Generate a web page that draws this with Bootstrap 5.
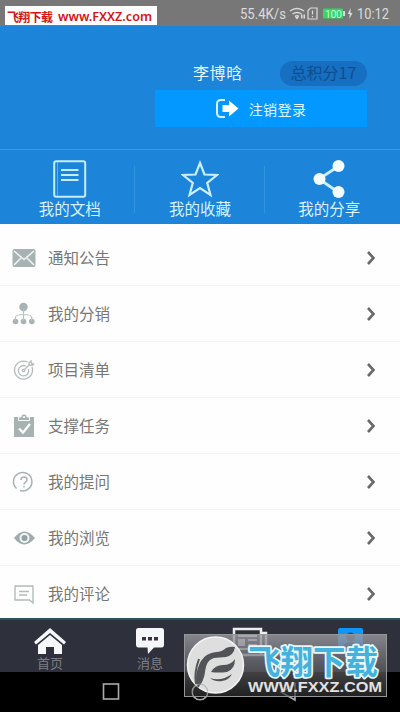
<!DOCTYPE html>
<html lang="zh-CN">
<head>
<meta charset="utf-8">
<meta name="viewport" content="width=device-width, initial-scale=1">
<title>我的</title>
<link href="https://cdn.jsdelivr.net/npm/bootstrap@5.3.0/dist/css/bootstrap.min.css" rel="stylesheet">
<style>
body{font-family:"Noto Sans CJK SC",sans-serif;width:400px;height:712px;overflow:hidden;background:#fefefe;line-height:1}
svg{display:block;flex:none}
.statusbar{height:26px;background:#777;color:#dcdcdc;font:14px/26px Roboto,sans-serif;padding-right:9px}
.site-tag{left:5px;top:6px;width:152px;height:19px;background:#fff;color:#d81818;white-space:nowrap}
.profile{height:123px;background:#1c84d9;padding:35px 33px 0 155px}
.profile-line{height:24px}
.user-name{font-size:16px;color:#e4f6ff;margin-left:38px;letter-spacing:.6px;padding-bottom:2px}
.points{width:87px;height:25px;background:#166fc0;color:#0c4e92;font-size:16px;padding-bottom:2px}
.logout{height:37px;margin-top:5px;background:#0398ff;color:#e6f8ff;font-size:14px;letter-spacing:.4px;border-radius:1px;padding-right:1px}
.logout span{margin-left:10px}
.shortcuts{height:75px;background:#1c84d9;border-top:1px solid #3b9be6;color:#d9f3ff;font-size:15.5px}
.shortcuts>div{padding-top:9px}
.shortcuts span{margin-top:2px}
.shortcuts .split::before,.shortcuts .split::after{content:"";position:absolute;left:1px;top:16px;height:47px;border-left:1px solid #3293df}
.shortcuts .split::after{left:auto;right:2px}
.nudge-right{transform:translateX(3px)}
.nudge-left{transform:translateX(-4px)}
.menu-rows{height:394px;overflow:hidden}
.menu-row{height:56px;padding:0 23px 0 11px;border-bottom:1px solid #f3f5f5;color:#777;font-size:15.5px;background:#fefefe}
.menu-row:first-child{height:62px;padding-top:6px}
.menu-row span{margin-left:11px}
.tabs{height:54px;background:#2e303b;border-top:2px solid #285361;color:#7c7e86;font-size:13px;padding-top:7px}
.tabs span{margin-top:-1px}
.sysnav{height:40px;background:#000}
.overlay{left:184px;top:634px}
</style>
<script src="https://cdn.jsdelivr.net/npm/bootstrap@5.3.0/dist/js/bootstrap.bundle.min.js"></script>
</head>
<body class="position-relative m-0">
<header class="statusbar d-flex justify-content-end align-items-center">
  <svg width="152" height="26" viewBox="0 0 152 26" fill="#dcdcdc">
    <text x="1" y="19" font-size="14" textLength="46" lengthAdjust="spacingAndGlyphs">55.4K/s</text>
    <g fill="none" stroke="#dcdcdc" stroke-width="1.500"><path d="M51 11q7-5 14 0M53.500 14q4.500-3 9 0M56 16.500q2-1.300 4 0"/><path d="M71.500 8h6.500v11h-9v-8.500zM73.500 10.500v4M73.500 16v1.200" stroke-width="1.200"/></g>
    <path d="M56 17h4l-2 2.500zM62 14.500h1.500v4H62zM64.500 14.500H66v4h-1.500z"/>
    <rect x="84" y="8.500" width="20" height="10" rx="1" fill="#35d568"/><path d="M104 11h2v5h-2z"/>
    <text x="86" y="17.500" font-size="10.500" fill="#c2ffd3" textLength="17">100</text>
    <path d="m111.500 8-2.700 6h2l-.5 5 3.200-6h-2z"/>
    <text x="118" y="19" font-size="14" textLength="32" lengthAdjust="spacingAndGlyphs">10:12</text>
  </svg>
</header>
<div class="site-tag position-absolute">
  <svg width="152" height="19" fill="#d31515"><text x="2" y="15.500" font-family="Noto Sans CJK SC,sans-serif" font-weight="700" font-size="12" textLength="46">飞翔下载</text><text x="53" y="14.500" font-family="Noto Sans,sans-serif" font-weight="600" font-size="12" textLength="94" lengthAdjust="spacingAndGlyphs">www.FXXZ.com</text></svg>
</div>
<section class="profile">
  <div class="profile-line d-flex justify-content-between align-items-center">
    <div class="user-name">李博晗</div>
    <div class="points rounded-pill d-flex align-items-center justify-content-center">总积分17</div>
  </div>
  <div class="logout d-flex align-items-center justify-content-center">
    <svg width="24" height="22" viewBox="0 0 24 22"><path d="M10 2H6Q2 2 2 6v9q0 4 4 4h4" fill="none" stroke="#d4f2ff" stroke-width="2"/><path d="M7.500 7H14V2.500l9.500 8-9.500 8V14H7.500z" fill="#fff"/></svg>
    <span>注销登录</span>
  </div>
</section>
<section class="shortcuts row g-0 text-center">
  <div class="col d-flex flex-column align-items-center">
    <svg class="nudge-right" width="34" height="40" viewBox="0 0 34 40"><g fill="none" stroke="#c5edff" stroke-width="2"><rect x="1.200" y="2.200" width="31" height="35.500" rx="2"/><path d="M4.500 3v34" stroke-width="1" opacity=".4"/><path d="M8 11h17.500M8 16h17.500M8 21h17.500" stroke-width="2.200"/></g></svg>
    <span class="nudge-right">我的文档</span>
  </div>
  <div class="col split position-relative d-flex flex-column align-items-center">
    <svg width="38" height="40" viewBox="0 0 38 40"><path d="m19 4 4.500 11.500 12.500.5-9.800 7.800L29.500 36 19 29 8.500 36l3.300-12.200L2 16l12.500-.5z" fill="none" stroke="#c9efff" stroke-width="2.200"/></svg>
    <span>我的收藏</span>
  </div>
  <div class="col d-flex flex-column align-items-center">
    <svg class="nudge-left" width="34" height="40" viewBox="0 0 34 40"><path d="M26 7.500 7 20l19 13" fill="none" stroke="#c9efff" stroke-width="2.800"/><g fill="#f4fcff"><circle cx="26.500" cy="7" r="6"/><circle cx="7.500" cy="20" r="6"/><circle cx="26.500" cy="33" r="6"/></g></svg>
    <span class="nudge-left">我的分享</span>
  </div>
</section>
<main class="menu-rows">
  <div class="menu-row d-flex align-items-center">
    <svg width="26" height="26" viewBox="0 0 26 26"><rect x="1.500" y="4" width="23" height="18" rx="2" fill="#a7b2b2"/><path d="m3 6 10 8.500L23 6M3 20l7-7M23 20l-7-7" fill="none" stroke="#f0f4f4" stroke-width="1.500"/></svg>
    <span>通知公告</span><svg class="ms-auto" width="13" height="16"><path d="m4 2 5.500 6L4 14" fill="none" stroke="#6a6a6a" stroke-width="2.600"/></svg>
  </div>
  <div class="menu-row d-flex align-items-center">
    <svg width="26" height="26" viewBox="0 0 26 26" fill="#a7b2b2"><circle cx="12.500" cy="6" r="4.200"/><circle cx="4.500" cy="20.500" r="2.800"/><circle cx="12.500" cy="20.500" r="2.800"/><circle cx="20.800" cy="20.500" r="2.800"/><path d="M12.500 8v12M4.500 20v-3.500q0-3 8-3t8.300 3V20" fill="none" stroke="#b9c2c2" stroke-width="1.200"/></svg>
    <span>我的分销</span><svg class="ms-auto" width="13" height="16"><path d="m4 2 5.500 6L4 14" fill="none" stroke="#6a6a6a" stroke-width="2.600"/></svg>
  </div>
  <div class="menu-row d-flex align-items-center">
    <svg width="26" height="26" viewBox="0 0 26 26" fill="none" stroke="#b3bbbb" stroke-width="1.300"><path d="M16.500 5A9 9 0 1 0 21 10M14.800 9A5.200 5.200 0 1 0 17.500 12"/><circle cx="12.500" cy="13.500" r="1.200"/><path d="m13 13 6-6M18 8V5.500L20 4l.5 2.500 2 .5-1.500 1.500z"/></svg>
    <span>项目清单</span><svg class="ms-auto" width="13" height="16"><path d="m4 2 5.500 6L4 14" fill="none" stroke="#6a6a6a" stroke-width="2.600"/></svg>
  </div>
  <div class="menu-row d-flex align-items-center">
    <svg width="26" height="26" viewBox="0 0 26 26"><path d="M3 4h20v20H3z" fill="#a7b2b2"/><path d="M7.500 7.500V4H10q0-3 3-3t3 3h2.500v3.500z" fill="#a7b2b2" stroke="#f4f7f7"/><circle cx="13" cy="4" r="1.100" fill="#fff"/><path d="m8 15.500 4 4 7-8.500" fill="none" stroke="#fff" stroke-width="2.200"/></svg>
    <span>支撑任务</span><svg class="ms-auto" width="13" height="16"><path d="m4 2 5.500 6L4 14" fill="none" stroke="#6a6a6a" stroke-width="2.600"/></svg>
  </div>
  <div class="menu-row d-flex align-items-center">
    <svg width="26" height="26" viewBox="0 0 26 26" fill="none" stroke="#a7b2b2" stroke-width="1.500"><path d="M5.500 19.500A9.200 9.200 0 1 1 9 21.500M10 11q0-3 3-3t3 2.700q0 1.500-1.500 2.500-1.500.8-1.500 2.300M13 17v1.500"/></svg>
    <span>我的提问</span><svg class="ms-auto" width="13" height="16"><path d="m4 2 5.500 6L4 14" fill="none" stroke="#6a6a6a" stroke-width="2.600"/></svg>
  </div>
  <div class="menu-row d-flex align-items-center">
    <svg width="26" height="26" viewBox="0 0 26 26"><path d="M3 13q10-13 21 0-11 13-21 0z" fill="#a0abab"/><circle cx="13.500" cy="13" r="5" fill="#f1f5f5"/><circle cx="13.500" cy="13" r="3" fill="#94a1a1"/></svg>
    <span>我的浏览</span><svg class="ms-auto" width="13" height="16"><path d="m4 2 5.500 6L4 14" fill="none" stroke="#6a6a6a" stroke-width="2.600"/></svg>
  </div>
  <div class="menu-row d-flex align-items-center border-0">
    <svg width="26" height="26" viewBox="0 0 26 26" fill="none" stroke="#b2bbbb" stroke-width="1.400"><path d="M4 5h18v17l-3.500-3H4zM8 10.500h10M8 14h8"/></svg>
    <span>我的评论</span><svg class="ms-auto" width="13" height="16"><path d="m4 2 5.500 6L4 14" fill="none" stroke="#6a6a6a" stroke-width="2.600"/></svg>
  </div>
</main>
<nav class="tabs row g-0 text-center">
  <div class="col d-flex flex-column align-items-center">
    <svg width="34" height="30" viewBox="0 0 34 30" fill="#f5f7f8"><path d="M17 1 1 15l2 2.500L17 6l14 11.500 2-2.500z"/><path d="m17 8 12 10v9h-8v-7h-8v7H5v-9z"/></svg><span>首页</span>
  </div>
  <div class="col d-flex flex-column align-items-center">
    <svg width="30" height="30" viewBox="0 0 30 30"><path d="M3.500 1h23Q29 1 29 3.500v14q0 3-2.500 3H19L13 27l-.5-6.500h-9q-2.500 0-2.500-3v-14Q1 1 3.500 1z" fill="#f5f7f8"/><path d="M7 10h4v3.500H7zM13 10h4v3.500h-4zM19 10h4v3.500h-4z" fill="#35363f"/></svg><span>消息</span>
  </div>
  <div class="col d-flex flex-column align-items-center">
    <svg width="36" height="30" viewBox="0 0 36 30"><path d="M2 2h27v26H2zM29 6h5v22h-5" fill="none" stroke="#eee" stroke-width="2.500"/><path d="M6 9h19M6 22h19" stroke="#ddd" stroke-width="2"/><path d="M6 12h7v7H6zM16 12h9v2h-9zM16 17h9v2h-9z" fill="#ddd"/></svg>
  </div>
  <div class="col d-flex flex-column align-items-center">
    <svg width="30" height="30" viewBox="0 0 30 30"><rect x="3" y="1" width="25" height="26" rx="2" fill="#0e96f8"/><circle cx="15.500" cy="10" r="4.500" fill="#254d73"/><path d="M8 22q0-7 7.500-7t7.500 7z" fill="#254d73"/></svg>
  </div>
</nav>
<footer class="sysnav">
  <svg width="400" height="40" fill="none" stroke="#aaa" stroke-width="1.600"><rect x="103.500" y="12" width="15" height="15"/><circle cx="200" cy="20" r="7.800"/><path d="m295 12-14 8 14 8z"/></svg>
</footer>
<div class="overlay position-absolute">
  <svg width="204" height="64" viewBox="0 0 204 64">
    <defs><linearGradient id="glass" x2="0" y2="1"><stop stop-color="#9b9ba3" stop-opacity=".8"/><stop offset=".6" stop-color="#5c5c61" stop-opacity=".72"/><stop offset="1" stop-color="#333" stop-opacity=".65"/></linearGradient></defs>
    <rect x=".5" y=".5" width="202" height="62" fill="url(#glass)" stroke="#96969a"/>
    <circle cx="31.500" cy="31" r="28" fill="#dedede" stroke="#f4f4f4" stroke-width="1.500"/>
    <path d="M14 54C10 45 13 34 17 27q5-8 15-9 6 0 10-4 5-2 9-1-1 8-9 10l-12 1c-7 2-8 8-9 14q-1 9-7 16zM27 38q4-7 12-7 8 0 12-6 0 10-8 13-9 1-16 0zM26 44q11 4 22-4-3 6-10 7-7 1-12-3z" fill="#515356"/><path d="M12 50q-2-12 3-25" fill="none" stroke="#515356" stroke-width="2"/><circle cx="16" cy="58" r="7.800" fill="none" stroke="#aaa" stroke-width="1.200" opacity=".7" clip-path="inset(0 0 0 0)"/>
    <text x="64" y="39.500" font-family="Noto Sans CJK SC,sans-serif" font-weight="700" font-size="33" textLength="130" lengthAdjust="spacingAndGlyphs" fill="#43b2dc" stroke="#e9f8fd" stroke-width="3.500" stroke-linejoin="round" paint-order="stroke">飞翔下载</text>
    <text x="64" y="58" font-family="Liberation Sans,sans-serif" font-weight="700" font-size="14" textLength="134" lengthAdjust="spacingAndGlyphs" fill="#e2e2e2">WWW.FXXZ.COM</text>
  </svg>
</div>
</body>
</html>
